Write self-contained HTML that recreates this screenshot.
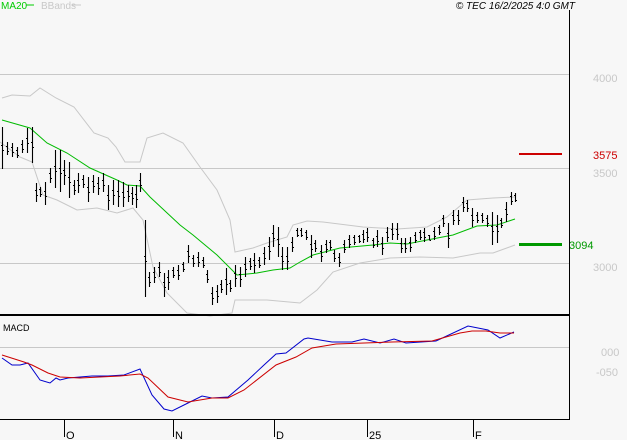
<!DOCTYPE html>
<html><head><meta charset="utf-8"><style>
html,body{margin:0;padding:0;background:#f7f7f7;}
svg{display:block;font-family:"Liberation Sans",sans-serif;}
</style></head><body>
<svg id="s" width="627" height="440" viewBox="0 0 627 440" xmlns="http://www.w3.org/2000/svg">
<rect width="627" height="440" fill="#f7f7f7"/>
<text x="1" y="9" font-size="10" fill="#00cc00">MA20</text>
<line x1="26" y1="5" x2="34" y2="5" stroke="#00cc00"/>
<text x="41" y="9" font-size="10" fill="#c8c8c8">BBands</text>
<line x1="72" y1="5" x2="81" y2="5" stroke="#c8c8c8"/>
<text x="575" y="9" font-size="10" font-style="italic" text-anchor="end" fill="#000">© TEC 16/2/2025 4:0 GMT</text>
<g stroke="#c8c8c8" stroke-width="1">
<line x1="0" y1="74.5" x2="569" y2="74.5"/>
<line x1="0" y1="168.5" x2="569" y2="168.5"/>
<line x1="0" y1="263.5" x2="569" y2="263.5"/>
<line x1="0" y1="347.5" x2="569" y2="347.5"/>
</g>
<g font-size="11" fill="#c8c8c8">
<text x="593" y="82">4000</text>
<text x="593" y="177">3500</text>
<text x="593" y="271">3000</text>
<text x="601" y="356">000</text>
<text x="596" y="376">-050</text>
</g>
<polyline fill="none" stroke="#c8c8c8" points="2,98 12,95 30,96 40,88 56,98 74,107 94,133 108,138 116,147 125,162 140,162 147,138 163,133 183,143 200,167 217,190 230,220 235,252 253,248 267,243 287,237 293,225 307,221 323,222 363,227 397,229 427,227 447,217 467,200 493,198 515,197"/>
<polyline fill="none" stroke="#c8c8c8" points="0,142 20,157 32,162 43,195 57,200 77,210 97,208 117,213 133,208 143,220 153,267 167,293 187,313 210,316 232,313 235,300 267,300 300,303 317,290 333,272 360,263 390,258 420,257 453,258 480,253 493,253 515,245"/>
<polyline fill="none" stroke="#00bb00" points="2,120 30,128 47,143 67,153 90,168 117,180 127,185 140,186 150,197 180,225 193,235 217,255 237,275 257,273 273,270 290,268 300,262 313,255 340,248 373,245 390,243 407,244 427,240 453,235 477,226 497,225 515,219"/>
<path id="bars" fill="none" stroke="#000" stroke-width="1.1" d=""/>
<line x1="519" y1="154" x2="562" y2="154" stroke="#cc0000" stroke-width="2"/>
<text x="593" y="159" font-size="11" fill="#cc0000">3575</text>
<line x1="519" y1="244.5" x2="562" y2="244.5" stroke="#009900" stroke-width="3"/>
<text x="569" y="249" font-size="11" fill="#009900">3094</text>
<line x1="569.5" y1="10" x2="569.5" y2="419" stroke="#000"/>
<line x1="0" y1="315" x2="570" y2="315" stroke="#000" stroke-width="2"/>
<line x1="0" y1="419.5" x2="570" y2="419.5" stroke="#000"/>
<text x="3" y="331" font-size="9" fill="#000">MACD</text>
<polyline fill="none" stroke="#0000cc" points="2,358 12,365 20,365 28,363 40,380 50,383 56,378 60,380 68,378 92,376 108,376 124,375 140,369 152,395 164,409 172,411 188,403 202,396 212,398 228,397 248,380 264,365 276,354 286,353 304,339 308,338 332,342 352,342 364,339 380,343 394,339 406,343 436,341 468,326 488,330 500,338 514,332"/>
<polyline fill="none" stroke="#cc0000" points="2,355 24,362 32,365 48,373 60,377 80,378 120,376 140,374 148,378 168,397 188,402 212,398 228,398 244,390 276,365 296,357 312,348 336,344 392,342 432,341 460,333 472,331 486,331 500,333 514,333"/>
<g stroke="#000"><line x1="64.5" y1="419" x2="64.5" y2="437"/><line x1="173.5" y1="419" x2="173.5" y2="437"/><line x1="274.5" y1="419" x2="274.5" y2="437"/><line x1="367.5" y1="419" x2="367.5" y2="437"/><line x1="473.5" y1="419" x2="473.5" y2="437"/></g>
<g font-size="11" fill="#000"><text x="66" y="439">O</text><text x="175" y="439">N</text><text x="276" y="439">D</text><text x="369" y="439">25</text><text x="475" y="439">F</text></g>
</svg>
<script>
var b=[[2,127,169],[7,142,155],[12,143,157],[17,147,158],[22,140,153],[27,128,153],[32,127,163],[36,183,202],[40,187,197],[45,182,205],[50,168,183],[55,150,188],[60,150,192],[64,160,185],[69,162,198],[74,180,195],[78,173,193],[83,175,188],[88,177,202],[93,175,193],[98,177,195],[103,173,192],[108,185,210],[113,180,205],[118,180,207],[123,182,207],[128,185,202],[132,187,205],[136,185,208],[140,173,192],[145,220,297],[149,272,287],[154,267,283],[159,262,277],[164,273,297],[168,270,290],[173,267,278],[178,265,280],[183,262,272],[188,245,263],[193,255,267],[198,252,267],[203,257,268],[207,270,283],[212,287,305],[217,285,303],[221,280,293],[226,268,295],[230,280,292],[235,265,287],[240,267,287],[245,257,277],[250,258,270],[254,253,273],[259,257,268],[264,247,265],[269,237,260],[273,225,247],[278,227,257],[282,247,270],[287,247,270],[292,237,252],[297,228,237],[301,228,237],[306,230,240],[311,235,258],[315,240,252],[321,245,262],[326,240,253],[330,240,250],[334,250,262],[339,253,267],[344,240,253],[349,235,248],[354,235,245],[359,235,243],[363,230,243],[367,228,242],[373,238,248],[377,230,247],[382,237,255],[387,227,242],[392,223,240],[397,223,240],[401,238,253],[405,238,253],[410,237,252],[415,232,243],[420,230,240],[424,228,242],[429,235,240],[434,227,240],[439,225,235],[443,215,227],[448,223,248],[453,210,225],[458,210,225],[463,197,212],[467,200,212],[472,208,227],[477,212,223],[482,213,223],[487,215,227],[492,212,245],[497,215,243],[501,218,228],[506,202,222],[511,192,205],[515,193,202]];
var d="";b.forEach(function(r){var x=r[0]+0.5,m=Math.round((r[1]+r[2])/2)+0.5;d+="M"+x+" "+r[1]+"V"+r[2]+"M"+(x-1.5)+" "+(m-3)+"H"+x+"M"+x+" "+(m+2)+"H"+(x+1.5);});
document.getElementById("bars").setAttribute("d",d);
</script>
</body></html>
